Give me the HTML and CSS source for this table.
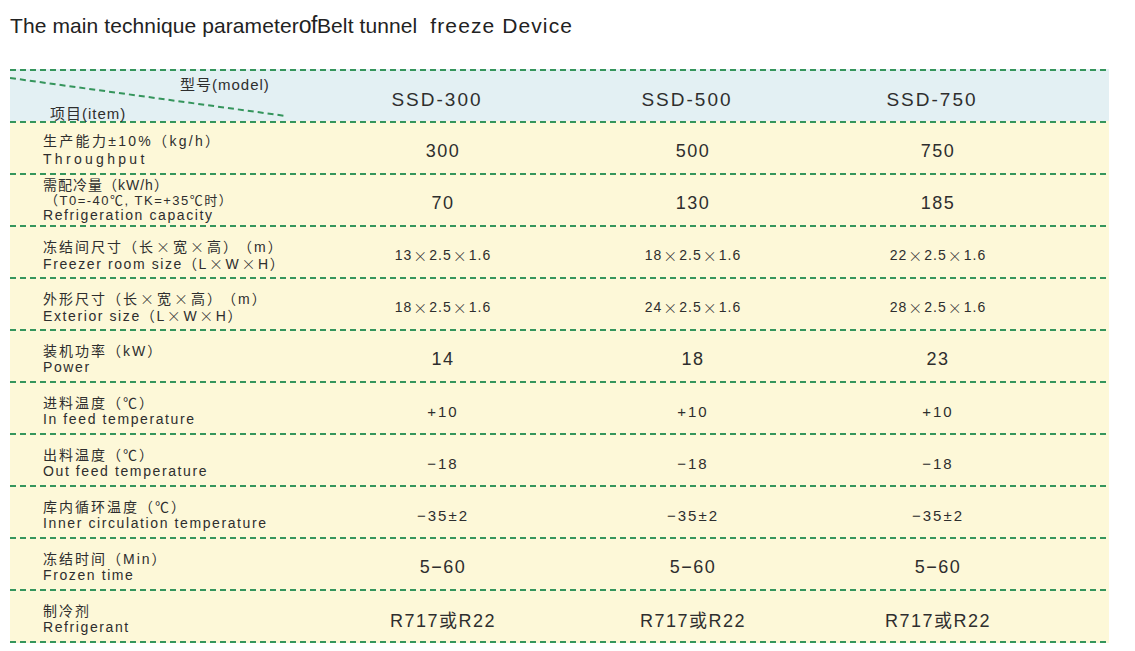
FILE: index.html
```html
<!DOCTYPE html>
<html lang="zh">
<head>
<meta charset="utf-8">
<title>Belt tunnel freeze Device</title>
<link rel="stylesheet" href="styles.css">
</head>
<body>
<div class="page">
  <h1 class="title"><span class="t1">The main technique parameter</span><span class="t2">of</span><span class="t3">Belt tunnel</span><span class="t4">freeze Device</span></h1>
  <div class="spec">
    <div class="row head">
      <div class="corner">
        <svg class="diag" width="290" height="50" viewBox="0 0 290 50"><line x1="0" y1="7" x2="276" y2="45" stroke="#35955c" stroke-width="2" stroke-dasharray="6 4"/></svg>
        <span class="model-lbl">型号(model)</span>
        <span class="item-lbl">项目(item)</span>
      </div>
      <div class="cell model">SSD-300</div>
      <div class="cell model">SSD-500</div>
      <div class="cell model">SSD-750</div>
    </div>

    <div class="row">
      <div class="label l-wide"><span class="cn cn-mid">生产能力±10%（kg/h）</span><span class="en en-wide">Throughput</span></div>
      <div class="cell big">300</div>
      <div class="cell big">500</div>
      <div class="cell big">750</div>
    </div>

    <div class="row">
      <div class="label l-three"><span class="cn cn-tight">需配冷量（kW/h）</span><span class="cn-sub">（T0=-40℃, TK=+35℃时）</span><span class="en">Refrigeration capacity</span></div>
      <div class="cell big">70</div>
      <div class="cell big">130</div>
      <div class="cell big">185</div>
    </div>

    <div class="row">
      <div class="label"><span class="cn">冻结间尺寸（长<span class="x">×</span>宽<span class="x">×</span>高）<span class="unit">（m）</span></span><span class="en">Freezer room size（L<span class="x">×</span>W<span class="x">×</span>H）</span></div>
      <div class="cell small">13<span class="x">×</span>2.5<span class="x">×</span>1.6</div>
      <div class="cell small">18<span class="x">×</span>2.5<span class="x">×</span>1.6</div>
      <div class="cell small">22<span class="x">×</span>2.5<span class="x">×</span>1.6</div>
    </div>

    <div class="row">
      <div class="label"><span class="cn">外形尺寸（长<span class="x">×</span>宽<span class="x">×</span>高）<span class="unit">（m）</span></span><span class="en">Exterior size（L<span class="x">×</span>W<span class="x">×</span>H）</span></div>
      <div class="cell small">18<span class="x">×</span>2.5<span class="x">×</span>1.6</div>
      <div class="cell small">24<span class="x">×</span>2.5<span class="x">×</span>1.6</div>
      <div class="cell small">28<span class="x">×</span>2.5<span class="x">×</span>1.6</div>
    </div>

    <div class="row">
      <div class="label"><span class="cn">装机功率（kW）</span><span class="en">Power</span></div>
      <div class="cell big">14</div>
      <div class="cell big">18</div>
      <div class="cell big">23</div>
    </div>

    <div class="row">
      <div class="label"><span class="cn">进料温度（℃）</span><span class="en">In feed temperature</span></div>
      <div class="cell mid">+10</div>
      <div class="cell mid">+10</div>
      <div class="cell mid">+10</div>
    </div>

    <div class="row">
      <div class="label"><span class="cn">出料温度（℃）</span><span class="en">Out feed temperature</span></div>
      <div class="cell mid">−18</div>
      <div class="cell mid">−18</div>
      <div class="cell mid">−18</div>
    </div>

    <div class="row">
      <div class="label"><span class="cn">库内循环温度（℃）</span><span class="en">Inner circulation temperature</span></div>
      <div class="cell mid">−35±2</div>
      <div class="cell mid">−35±2</div>
      <div class="cell mid">−35±2</div>
    </div>

    <div class="row">
      <div class="label"><span class="cn">冻结时间（Min）</span><span class="en">Frozen time</span></div>
      <div class="cell big">5−60</div>
      <div class="cell big">5−60</div>
      <div class="cell big">5−60</div>
    </div>

    <div class="row last">
      <div class="label"><span class="cn">制冷剂</span><span class="en">Refrigerant</span></div>
      <div class="cell big">R717或R22</div>
      <div class="cell big">R717或R22</div>
      <div class="cell big">R717或R22</div>
    </div>
  </div>
</div>
</body>
</html>
```

FILE: styles.css
```css
html, body {
  margin: 0;
  padding: 0;
  background: #ffffff;
}

body {
  font-family: "Liberation Sans", "Noto Sans CJK SC", sans-serif;
  color: #2e2e2e;
}

.page {
  padding: 12px 0 0 10px;
}

.title {
  margin: 0;
  height: 57px;
  font-weight: normal;
  font-size: 21px;
  line-height: 26px;
  color: #222;
  white-space: nowrap;
}

.t1 { font-size: 21px; letter-spacing: 0.1px; }
.t2 { font-size: 23px; letter-spacing: -0.5px; }
.t3 { font-size: 21px; letter-spacing: 0.1px; }
.t4 { font-size: 21px; letter-spacing: 1.1px; margin-left: 13px; }

.spec {
  width: 1099px;
}

.row {
  display: grid;
  grid-template-columns: 308px 250px 250px 240px;
  height: 50px;
  padding-top: 2px;
  background:
    repeating-linear-gradient(90deg, #35955c 0 6px, transparent 6px 10px) top left / 100% 2px no-repeat,
    #fdf8d8;
}

.row.head {
  background:
    repeating-linear-gradient(90deg, #35955c 0 6px, transparent 6px 10px) top left / 100% 2px no-repeat,
    #e3f0f3;
}

.row.last {
  height: 50px;
  padding-bottom: 2px;
  background:
    repeating-linear-gradient(90deg, #35955c 0 6px, transparent 6px 10px) top left / 100% 2px no-repeat,
    repeating-linear-gradient(90deg, #35955c 0 6px, transparent 6px 10px) bottom left / 100% 2px no-repeat,
    #fdf8d8;
}

.corner {
  position: relative;
  display: flex;
  flex-direction: column;
  padding-top: 5px;
  gap: 11px;
  font-size: 15px;
  line-height: 18px;
  letter-spacing: 1px;
}

.diag {
  position: absolute;
  left: 0;
  top: 0;
}

.model-lbl { padding-left: 170px; }
.item-lbl { padding-left: 40px; }

.cell {
  display: flex;
  align-items: center;
  justify-content: center;
  padding-top: 6px;
  white-space: nowrap;
}

.cell.model {
  font-size: 19px;
  letter-spacing: 2px;
  padding-right: 12px;
}

.cell.big {
  font-size: 18px;
  letter-spacing: 1.5px;
}

.cell.mid {
  font-size: 15px;
  letter-spacing: 2px;
}

.cell.small {
  font-size: 14px;
  letter-spacing: 1px;
}

.x {
  font-family: "Noto Sans CJK SC", sans-serif;
  font-weight: 300;
  margin: 0 1px;
}

.unit {
  margin-left: 6px;
}

.label {
  display: flex;
  flex-direction: column;
  justify-content: center;
  padding-left: 33px;
  padding-top: 6px;
  line-height: 16px;
  white-space: nowrap;
}

.label.l-wide {
  line-height: 18px;
  padding-top: 4px;
}

.label.l-three {
  padding-top: 0;
  line-height: 15px;
}

.cn {
  font-size: 14px;
  letter-spacing: 2px;
}

.cn-mid { letter-spacing: 2.3px; }
.cn-tight { letter-spacing: 1px; font-size: 14px; }

.cn-sub {
  font-size: 13px;
  letter-spacing: 1.5px;
  padding-left: 2px;
}

.en {
  font-size: 14px;
  letter-spacing: 1.6px;
}

.en-wide {
  letter-spacing: 3.3px;
}
```
